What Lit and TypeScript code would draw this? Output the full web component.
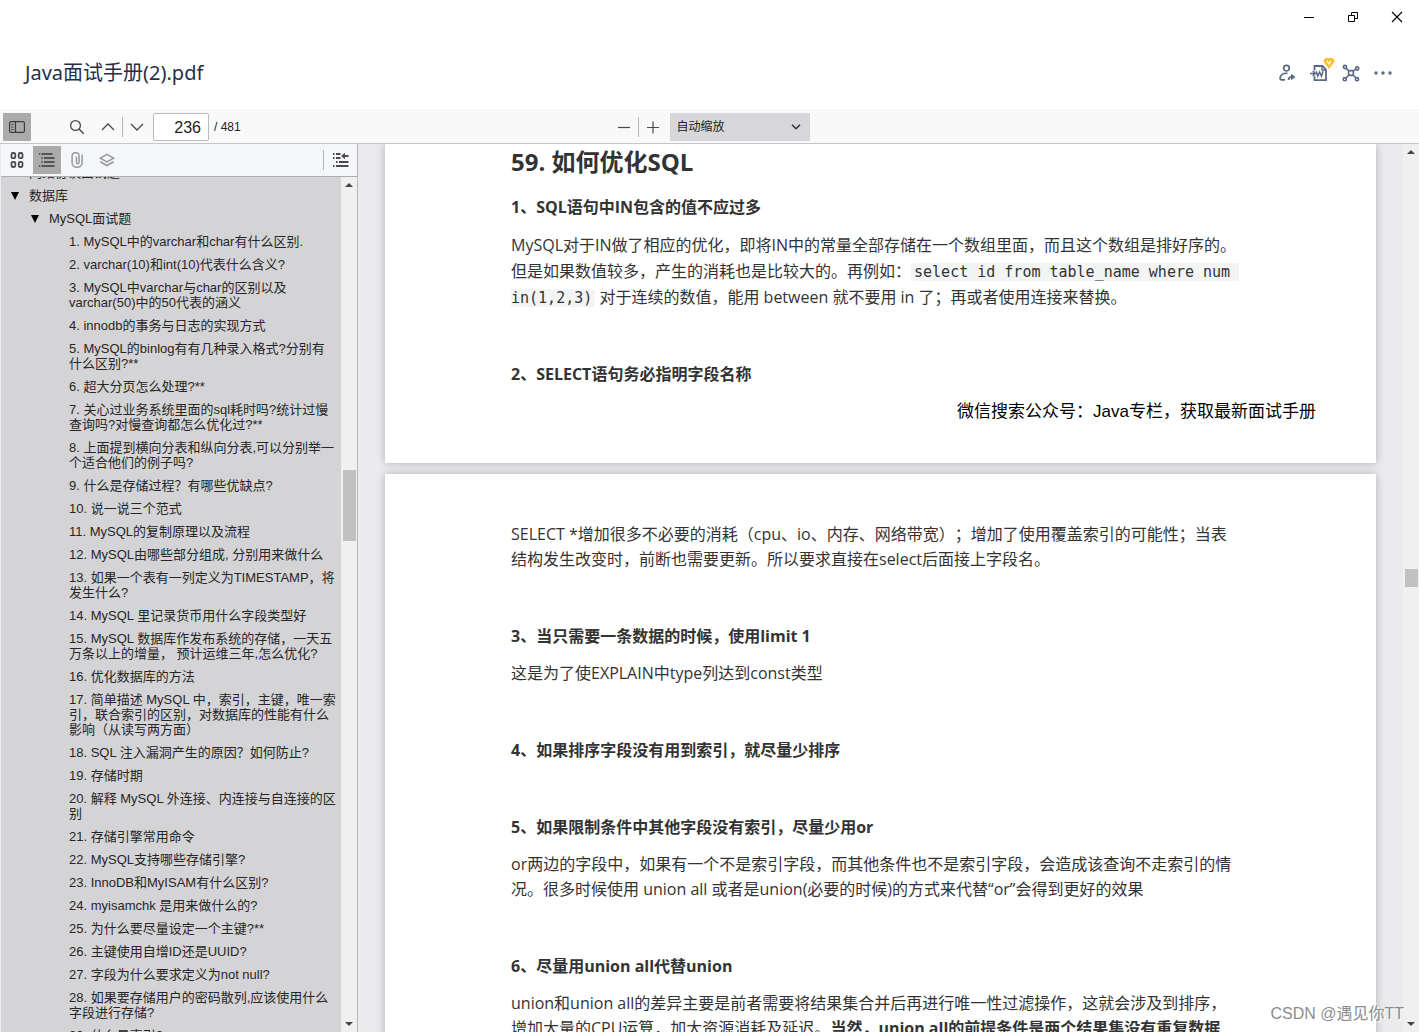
import { LitElement, html, css, svg, nothing, TemplateResult } from "lit";
import { customElement, property } from "lit/decorators.js";

interface OutlineNode {
  title: string;
  open?: boolean;
  children?: OutlineNode[];
}

const questions = [
  "1. MySQL中的varchar和char有什么区别.",
  "2. varchar(10)和int(10)代表什么含义?",
  "3. MySQL中varchar与char的区别以及varchar(50)中的50代表的涵义",
  "4. innodb的事务与日志的实现方式",
  "5. MySQL的binlog有有几种录入格式?分别有什么区别?**",
  "6. 超大分页怎么处理?**",
  "7. 关心过业务系统里面的sql耗时吗?统计过慢查询吗?对慢查询都怎么优化过?**",
  "8. 上面提到横向分表和纵向分表,可以分别举一个适合他们的例子吗?",
  "9. 什么是存储过程？有哪些优缺点?",
  "10. 说一说三个范式",
  "11. MySQL的复制原理以及流程",
  "12. MySQL由哪些部分组成, 分别用来做什么",
  "13. 如果一个表有一列定义为TIMESTAMP，将发生什么?",
  "14. MySQL 里记录货币用什么字段类型好",
  "15. MySQL 数据库作发布系统的存储，一天五万条以上的增量， 预计运维三年,怎么优化?",
  "16. 优化数据库的方法",
  "17. 简单描述 MySQL 中，索引，主键，唯一索引，联合索引的区别，对数据库的性能有什么影响（从读写两方面）",
  "18. SQL 注入漏洞产生的原因？如何防止?",
  "19. 存储时期",
  "20. 解释 MySQL 外连接、内连接与自连接的区别",
  "21. 存储引擎常用命令",
  "22. MySQL支持哪些存储引擎?",
  "23. InnoDB和MyISAM有什么区别?",
  "24. myisamchk 是用来做什么的?",
  "25. 为什么要尽量设定一个主键?**",
  "26. 主键使用自增ID还是UUID?",
  "27. 字段为什么要求定义为not null?",
  "28. 如果要存储用户的密码散列,应该使用什么字段进行存储?",
  "29. 什么是索引?",
];

const outline: OutlineNode[] = [
  { title: "网络协议面试题", open: false, children: [] },
  {
    title: "数据库",
    open: true,
    children: [
      { title: "MySQL面试题", open: true, children: questions.map((title) => ({ title })) },
    ],
  },
];

const icon = (size: number, body: TemplateResult | ReturnType<typeof svg>) => html`
  <svg width=${size} height=${size} viewBox="0 0 ${size} ${size}" fill="none" stroke="currentColor" aria-hidden="true">
    ${body}
  </svg>
`;

const icons = {
  minimize: icon(12, svg`<path d="M1 6.5h10"/>`),
  restore: icon(12, svg`<path d="M1.5 4.5h6v6h-6zM4.5 4.5v-3h6v6h-3"/>`),
  close: icon(12, svg`<path d="M1 1l10 10M11 1L1 11" stroke-width="1.1"/>`),
  share: icon(18, svg`
    <g stroke-width="1.7"><circle cx="8.500" cy="4.200" r="2.800"/>
    <path d="M9.500 9.300c-4.400-.4-7.200 1.700-7.400 4.600-.1 1.200.4 2 1.500 2h3.400"/></g>
    <path d="M10.500 15.800c.3-2 1.200-2.900 3-2.900" stroke-width="1.900"/>
    <path d="M13 9.700l4.500 3.300-4.500 3.300z" fill="currentColor" stroke="none"/>`),
  word: icon(18, svg`
    <path d="M4.500 6.500V2h8l3.500 3.500V16.200H4.500v-4" stroke-width="1.800"/>
    <path d="M12 2v4h4" stroke-width="1.400"/>
    <path d="M0 9.500h4.500M2.800 7l2.500 2.500L2.800 12" stroke-width="1.600"/>
    <path d="M6.200 7.300l1.500 4.800 1.900-4 1.900 4L13 7.300" stroke-width="1.500"/>`),
  gem: html`<svg class="gem" width="12" height="11" viewBox="0 0 12 11" aria-hidden="true">
    <path d="M2.500 0h7L12 3 6.800 10q-.8 1-1.600 0L0 3z" fill="#fbc02c"/>
    <path d="M4 2.800L6 6l2-3.200" fill="none" stroke="#fff" stroke-width="1.300"/></svg>`,
  nodes: icon(18, svg`
    <g stroke-width="1.600"><rect x="6.600" y="6.600" width="4.800" height="4.800" rx="1.800"/><circle cx="3" cy="3" r="1.600"/><circle cx="15.200" cy="4.500" r="1.600"/>
    <circle cx="2.800" cy="15.200" r="1.600"/><circle cx="15" cy="15.200" r="1.600"/>
    <path d="M4 4.200l3 2.900M13.700 5.200l-2.500 1.900M4 14l3-3M14 14l-3-3"/></g>`),
  more: icon(18, svg`<g fill="currentColor" stroke="none"><circle cx="2" cy="9" r="1.700"/><circle cx="9" cy="9" r="1.700"/><circle cx="16" cy="9" r="1.700"/></g>`),
  sidebar: icon(16, svg`<rect x=".6" y="2.600" width="14.800" height="10.800" rx="1.500" stroke-width="1.200"/><path d="M6.500 2.500v11" stroke-width="1.200"/><path d="M2.500 5.500h2M2.500 8h2M2.500 10.500h2"/>`),
  search: icon(16, svg`<circle cx="6.500" cy="6.500" r="4.900" stroke-width="1.300"/><path d="M10.200 10.200l4.500 4.500" stroke-width="1.500"/>`),
  up: icon(16, svg`<path d="M2 11l6-6 6 6" stroke-width="1.300"/>`),
  down: icon(16, svg`<path d="M2 5l6 6 6-6" stroke-width="1.300"/>`),
  minus: icon(16, svg`<path d="M2 8.500h12" stroke-width="1.200"/>`),
  plus: icon(16, svg`<path d="M2 8.500h12M8 2.500v12" stroke-width="1.200"/>`),
  thumbs: icon(16, svg`<g stroke-width="1.800"><rect x="2.500" y="1" width="3.800" height="5.200" rx="1.400"/><rect x="9.700" y="1" width="3.800" height="5.200" rx="1.400"/><rect x="2.500" y="9.800" width="3.800" height="5.200" rx="1.400"/><rect x="9.700" y="9.800" width="3.800" height="5.200" rx="1.400"/></g>`),
  list: icon(16, svg`<path d="M0 2h1.300M2.500 6h1.300M2.500 10h1.300M0 14h1.300M2.500 2h11M5 6h10.500M5 10h10.500M2.500 14h13" stroke-width="1.700"/>`),
  clip: icon(16, svg`<path d="M7.500 4.500v6c0 1.700 2.600 1.700 2.600 0V4c0-4.200-7-4.200-7 0v6.700c0 6 10 6 10 0V2.500" stroke-width="1.500"/>`),
  layers: icon(16, svg`<path d="M8 2.300l6.700 3.800L8 10 1.300 6.100z" stroke-width="1.500"/><path d="M1.300 9.800L8 13.600l6.700-3.800" stroke-width="1.700"/>`),
  current: icon(16, svg`<path d="M0 2h1.500M3 2h4.500M0 6h1.500M3 6h4.500M3 10h1.500M6 10h9.500M0 14h1.500M3 14h12.500" stroke-width="1.900"/><path d="M11 4h4.500" stroke-width="2"/><path d="M12 .8v6.400L8 4z" fill="currentColor" stroke="none"/>`),
  chevron: html`<svg class="chevron" width="10" height="6" viewBox="0 0 10 6" fill="none" stroke="#333" stroke-width="1.500" aria-hidden="true"><path d="M1 .7l4 4 4-4"/></svg>`,
};

@customElement("scroll-rail")
export class ScrollRail extends LitElement {
  @property({ type: Number }) before = 0;
  @property({ type: Number }) size = 0;
  @property({ type: Number }) after = 0;

  static styles = css`
    :host { display: flex; flex-direction: column; align-items: center; width: 16px; flex: none; background: #f0f0f0; }
    .arrow { flex: none; height: 16px; display: flex; align-items: center; color: #444; }
    .thumb { width: 13px; background: #c1c1c1; }
  `;

  render() {
    return html`
      <span class="arrow"><svg width="8" height="4" viewBox="0 0 8 4"><path d="M0 4L4 0l4 4z" fill="currentColor"/></svg></span>
      <span style="flex-grow:${this.before}"></span>
      <span class="thumb" style="flex-grow:${this.size}"></span>
      <span style="flex-grow:${this.after}"></span>
      <span class="arrow"><svg width="8" height="4" viewBox="0 0 8 4"><path d="M0 0l4 4 4-4z" fill="currentColor"/></svg></span>
    `;
  }
}

@customElement("outline-tree")
export class OutlineTree extends LitElement {
  static styles = css`
    :host { display: block; flex: 1; min-width: 0; overflow: hidden; background: #d4d4d6; font: 13px/15px "Liberation Sans", "Noto Sans CJK SC", sans-serif; }
    ul { list-style: none; margin: 0; padding: 0 0 0 20px; }
    .root { margin-top: -16px; padding: 0 4px; }
    .row { display: flex; }
    .toggle { flex: none; width: 20px; height: 23px; margin: 0; padding: 0; border: 0; background: none; display: flex; align-items: center; justify-content: center; }
    .label { flex: 1; padding: 4px 0 4px 4px; color: #262626; text-decoration: none; }
    .leaf { padding-left: 24px; }
  `;

  private node(item: OutlineNode): TemplateResult {
    const arrow = item.open ? "M0 1h8L4 9z" : "M1 0v8l7-4z";
    return html`
      <li>
        <div class="row">
          ${item.children
            ? html`<button class="toggle" aria-label=${item.title} aria-expanded=${item.open ? "true" : "false"}>
                <svg width="9" height="9" viewBox="0 0 9 9"><path d=${arrow} fill="#000"/></svg>
              </button>`
            : nothing}
          <a class="label ${item.children ? "" : "leaf"}" href="#">${item.title}</a>
        </div>
        ${item.open && item.children ? html`<ul>${item.children.map((child) => this.node(child))}</ul>` : nothing}
      </li>
    `;
  }

  render() {
    return html`<ul class="root">${outline.map((item) => this.node(item))}</ul>`;
  }
}

@customElement("pdf-pages")
export class PdfPages extends LitElement {
  static styles = css`
    :host { display: flex; flex-direction: column; gap: 11px; flex: 1; min-width: 0; overflow: hidden; padding: 0 27px; background: #ebebed; color: #333; font: 16px/25px "Open Sans", "Noto Sans CJK SC", sans-serif; text-spacing-trim: space-all; }
    .page { flex: none; background: #fff; box-shadow: 0 0 8px rgba(0, 0, 0, 0.25); padding: 0 60px 38px 126px; }
    .page.next { padding-top: 48px; }
    h2 { margin: 0 0 14px; font-size: 24px; line-height: 36px; font-weight: 700; }
    h3 { margin: 0 0 12px; font-size: 16px; line-height: 26px; font-weight: 700; }
    h3.alone { margin-bottom: 51px; }
    p { margin: 0 0 51px; white-space: nowrap; }
    .roomy { line-height: 26px; }
    code { font: 15px/16px "DejaVu Sans Mono", monospace; background: #f3f4f4; border-radius: 3px; padding: 0 3px; }
    .note { margin: 0; text-align: right; color: #000; font-size: 17px; line-height: 26px; font-family: "Liberation Sans", "Noto Sans CJK SC", sans-serif; }
  `;

  render() {
    return html`
      <article class="page">
        <h2>59. 如何优化SQL</h2>
        <h3>1、SQL语句中IN包含的值不应过多</h3>
        <p class="roomy">MySQL对于IN做了相应的优化，即将IN中的常量全部存储在一个数组里面，而且这个数组是排好序的。<br>但是如果数值较多，产生的消耗也是比较大的。再例如：<code>select id from table_name where num&nbsp;<br>in(1,2,3)</code> 对于连续的数值，能用 between 就不要用 in 了；再或者使用连接来替换。</p>
        <h3>2、SELECT语句务必指明字段名称</h3>
        <p class="note">微信搜索公众号：Java专栏，获取最新面试手册</p>
      </article>
      <article class="page next">
        <p>SELECT *增加很多不必要的消耗（cpu、io、内存、网络带宽）；增加了使用覆盖索引的可能性；当表<br>结构发生改变时，前断也需要更新。所以要求直接在select后面接上字段名。</p>
        <h3>3、当只需要一条数据的时候，使用limit 1</h3>
        <p>这是为了使EXPLAIN中type列达到const类型</p>
        <h3 class="alone">4、如果排序字段没有用到索引，就尽量少排序</h3>
        <h3>5、如果限制条件中其他字段没有索引，尽量少用or</h3>
        <p>or两边的字段中，如果有一个不是索引字段，而其他条件也不是索引字段，会造成该查询不走索引的情<br>况。很多时候使用 union all 或者是union(必要的时候)的方式来代替“or”会得到更好的效果</p>
        <h3>6、尽量用union all代替union</h3>
        <p>union和union all的差异主要是前者需要将结果集合并后再进行唯一性过滤操作，这就会涉及到排序，<br>增加大量的CPU运算，加大资源消耗及延迟。<b>当然，union all的前提条件是两个结果集没有重复数据</b></p>
      </article>
    `;
  }
}

@customElement("app-root")
export class AppRoot extends LitElement {
  static styles = css`
    :host { display: flex; flex-direction: column; height: 100vh; overflow: hidden; position: relative; background: #fff; font: 12px/16px "Liberation Sans", "Noto Sans CJK SC", sans-serif; color: #222; }
    * { box-sizing: border-box; }
    button { margin: 0; padding: 0; border: 0; background: none; color: inherit; display: flex; align-items: center; justify-content: center; flex: none; }
    .window { display: flex; justify-content: flex-end; flex: none; color: #000; }
    .window button { width: 44px; height: 34px; }
    .heading { flex: none; height: 76px; padding: 2px 20px 0 25px; display: flex; align-items: center; justify-content: space-between; }
    h1 { margin: 0; color: #262f4a; font: 400 20px/28px "Noto Sans", "Noto Sans CJK SC", sans-serif; }
    .actions { display: flex; color: #5b6785; }
    .actions button { width: 32px; height: 32px; position: relative; }
    .gem { position: absolute; right: 0; top: 1px; }
    .toolbar { flex: none; height: 34px; padding: 0 3px; display: grid; grid-template-columns: 1fr auto 1fr; align-items: center; background: #f9f9fa; border-top: 1px solid #f1f1f3; border-bottom: 1px solid #c6c6c8; }
    .group { display: flex; align-items: center; }
    .tool { width: 28px; height: 28px; border-radius: 1px; color: #4a4a4a; }
    .active { background: #aaabaa; color: #3a3a3a; }
    .find { margin: 0 3px 0 32px; }
    .rule { width: 1px; height: 20px; background: #b5b5b8; flex: none; }
    .page-number { width: 56px; height: 28px; margin: 0 5px 0 2px; padding: 2px 7px 0; border: 1px solid #bbbbbc; border-radius: 2px; background: #fff; text-align: right; font: 16px/24px "Liberation Sans", sans-serif; color: #222; }
    .zoom { position: relative; display: flex; align-items: center; margin-left: 3px; }
    select { appearance: none; width: 140px; height: 28px; margin: 0; border: 0; border-radius: 0; padding: 0 24px 0 7px; background: #d7d7db; color: #222; font: inherit; }
    .chevron { position: absolute; right: 9px; pointer-events: none; }
    .body { flex: 1; min-height: 0; display: flex; }
    aside { flex: none; width: 358px; display: flex; flex-direction: column; border-right: 1px solid #b8b8ba; border-left: 1px solid #e9edf2; }
    .tabs { flex: none; height: 33px; display: flex; align-items: center; gap: 2px; padding: 0 2px; background: #f4f6f9; border-bottom: 1px solid #adadb0; }
    .faded { color: #9a9a9c; }
    .locate { margin-left: auto; display: flex; align-items: center; gap: 3px; }
    .scroller { flex: 1; min-height: 0; display: flex; }
    .credit { position: absolute; right: 15px; bottom: 6px; font-size: 16px; line-height: 24px; color: #8c8c8e; text-shadow: 1px 1px 0 #fff; }
  `;

  render() {
    return html`
      <div class="window">
        <button aria-label="最小化">${icons.minimize}</button>
        <button aria-label="还原">${icons.restore}</button>
        <button aria-label="关闭">${icons.close}</button>
      </div>
      <header class="heading">
        <h1>Java面试手册(2).pdf</h1>
        <div class="actions">
          <button aria-label="分享">${icons.share}</button>
          <button aria-label="转换为Word">${icons.word}${icons.gem}</button>
          <button aria-label="关联">${icons.nodes}</button>
          <button aria-label="更多">${icons.more}</button>
        </div>
      </header>
      <div class="toolbar">
        <div class="group">
          <button class="tool active" aria-label="切换侧栏">${icons.sidebar}</button>
          <button class="tool find" aria-label="查找">${icons.search}</button>
          <button class="tool" aria-label="上一页">${icons.up}</button>
          <span class="rule"></span>
          <button class="tool" aria-label="下一页">${icons.down}</button>
          <input class="page-number" id="page" aria-label="页码" .value=${"236"}>
          <label for="page">/ 481</label>
        </div>
        <div class="group">
          <button class="tool" aria-label="缩小">${icons.minus}</button>
          <span class="rule"></span>
          <button class="tool" aria-label="放大">${icons.plus}</button>
          <div class="zoom">
            <select aria-label="缩放"><option>自动缩放</option></select>
            ${icons.chevron}
          </div>
        </div>
      </div>
      <div class="body">
        <aside>
          <div class="tabs">
            <button class="tool" aria-label="缩略图">${icons.thumbs}</button>
            <button class="tool active" aria-label="文档大纲">${icons.list}</button>
            <button class="tool faded" aria-label="附件">${icons.clip}</button>
            <button class="tool faded" aria-label="图层">${icons.layers}</button>
            <div class="locate">
              <span class="rule"></span>
              <button class="tool" aria-label="当前大纲项">${icons.current}</button>
            </div>
          </div>
          <div class="scroller">
            <outline-tree></outline-tree>
            <scroll-rail .before=${277} .size=${71} .after=${475}></scroll-rail>
          </div>
        </aside>
        <pdf-pages></pdf-pages>
        <scroll-rail .before=${409} .size=${17} .after=${429}></scroll-rail>
      </div>
      <div class="credit">CSDN @遇见你TT</div>
    `;
  }
}
